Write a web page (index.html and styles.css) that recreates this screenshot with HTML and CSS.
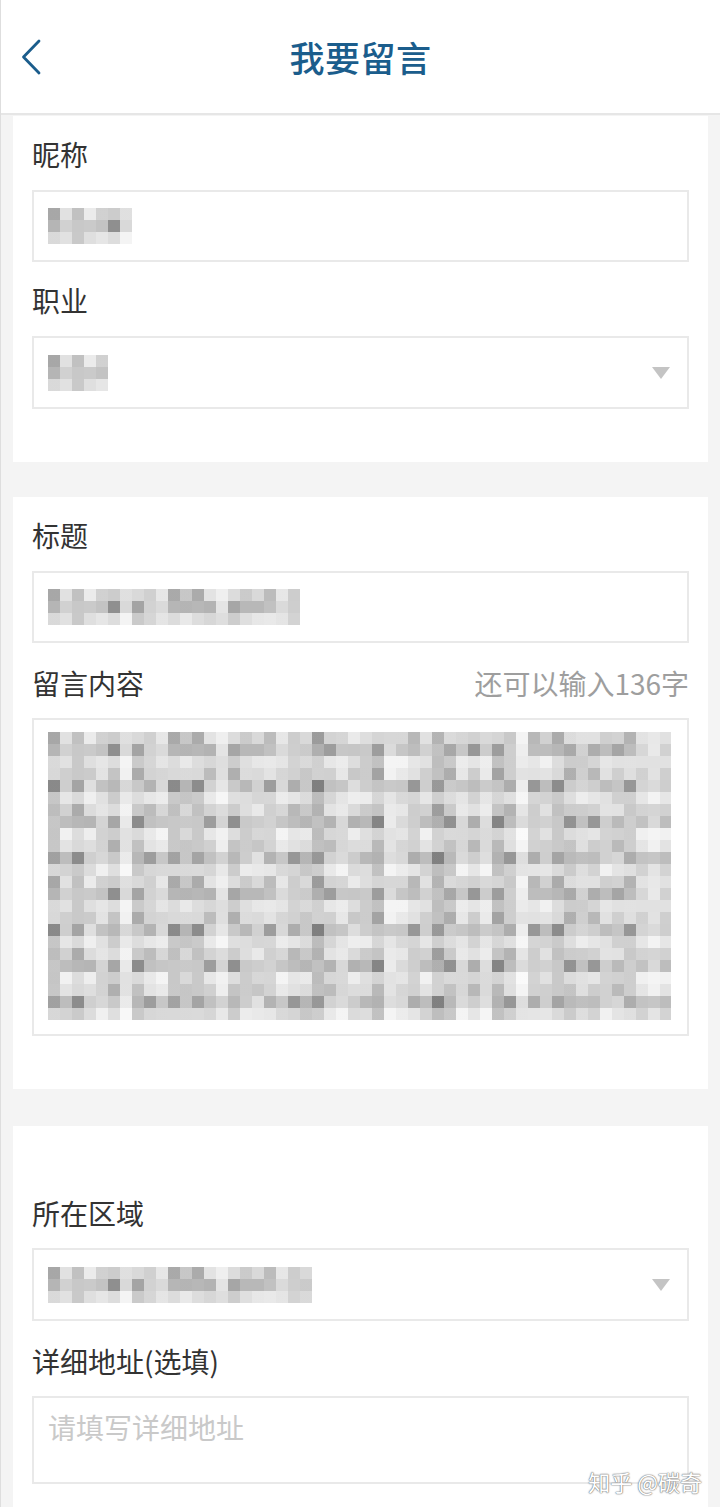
FILE: index.html
```html
<!DOCTYPE html>
<html lang="zh-CN">
<head>
<meta charset="utf-8">
<title>我要留言</title>
<link rel="stylesheet" href="styles.css">
</head>
<body>
<header class="topbar">
  <div class="back">
    <svg width="22" height="36" viewBox="0 0 22 36"><path d="M19 2 L3.5 18 L19 34" fill="none" stroke="#1b5d8c" stroke-width="2.8" stroke-linecap="round" stroke-linejoin="round"/></svg>
  </div>
  <h1 class="title">我要留言</h1>
  <div></div>
</header>

<section class="card card-first">
  <div class="label">昵称</div>
  <div class="field"><div class="mosaic m-nick"></div></div>
  <div class="label">职业</div>
  <div class="field select"><div class="mosaic m-job"></div><span class="caret"></span></div>
</section>

<section class="card card-mid">
  <div class="label">标题</div>
  <div class="field"><div class="mosaic m-title"></div></div>
  <div class="label label-row"><span>留言内容</span><span class="hint">还可以输入136字</span></div>
  <div class="field textarea"><div class="mosaic m-body"></div></div>
</section>

<section class="card card-last">
  <div class="label">所在区域</div>
  <div class="field select"><div class="mosaic m-area"></div><span class="caret"></span></div>
  <div class="label">详细地址(选填)</div>
  <div class="field address"><span class="placeholder">请填写详细地址</span></div>
  <div class="watermark">知乎 @碳奇</div>
</section>
</body>
</html>
```

FILE: styles.css
```css
* { box-sizing: border-box; }
html, body { margin: 0; padding: 0; }
body {
  background: #f4f4f4;
  font-family: "Noto Sans CJK SC", "Noto Sans", sans-serif;
  color: #333;
  width: 720px;
  height: 1507px;
  overflow: hidden;
  border-left: 1px solid #dedede;
}
.topbar {
  height: 115px;
  background: #fff;
  border-bottom: 2px solid #e6e6e6;
  display: grid;
  grid-template-columns: 1fr auto 1fr;
  align-items: center;
}
.back { padding-left: 19px; display: flex; align-items: center; }
.back svg { display: block; }
.title {
  margin: 0;
  font-size: 35px;
  font-weight: 500;
  color: #1b5d8c;
  line-height: 40px;
  letter-spacing: 0.5px;
}
.card {
  background: #fff;
  margin: 0 12px;
  padding: 20px 19px 53px 19px;
  position: relative;
}
.card-first { margin-top: 1px; }
.card-mid { margin-top: 35px; }
.card-last { margin-top: 37px; padding-top: 69px; padding-bottom: 23px; }
.label {
  font-size: 28px;
  line-height: 36px;
  margin-bottom: 18px;
  color: #333;
}
.field + .label { margin-top: 20px; }
.card-mid .field + .label,
.card-last .field + .label { margin-top: 22px; }
.card-mid .label-row,
.card-last .label { margin-bottom: 17px; }
.label-row { display: flex; justify-content: space-between; }
.hint { color: #9e9e9e; font-size: 28px; }
.field {
  height: 72px;
  border: 2px solid #e9e9e9;
  display: flex;
  align-items: center;
  padding: 0 14px;
  position: relative;
}
.select { height: 73px; }
.textarea { height: 318px; align-items: flex-start; padding-top: 12px; }
.address { height: 88px; align-items: flex-start; padding-top: 11px; }
.placeholder { font-size: 28px; line-height: 36px; color: #c9c9c9; }
.caret {
  position: absolute;
  right: 17px;
  top: 29px;
  width: 0; height: 0;
  border-left: 9px solid transparent;
  border-right: 9px solid transparent;
  border-top: 12px solid #c4c4c4;
}
.mosaic {
  height: 36px;
  background:
    repeating-conic-gradient(rgba(255,255,255,.2) 0 25%, rgba(255,255,255,0) 0 50%) 0 0 / 24px 24px,
    repeating-conic-gradient(rgba(0,0,0,.07) 0 25%, rgba(255,255,255,.12) 0 50%) 12px 0 / 72px 48px,
    repeating-conic-gradient(rgba(255,255,255,.25) 0 25%, rgba(255,255,255,0) 0 50%) 36px 12px / 120px 72px,
    repeating-linear-gradient(90deg, rgba(255,255,255,0) 0 12px, rgba(255,255,255,.25) 12px 24px, rgba(0,0,0,.07) 24px 36px, rgba(255,255,255,.08) 36px 48px, rgba(255,255,255,.4) 48px 60px),
    repeating-linear-gradient(90deg, rgba(0,0,0,.09) 0 12px, rgba(255,255,255,0) 12px 36px, rgba(255,255,255,.3) 36px 48px, rgba(0,0,0,.05) 48px 72px, rgba(255,255,255,.55) 72px 84px, rgba(255,255,255,0) 84px 120px, rgba(0,0,0,.08) 120px 132px),
    linear-gradient(180deg, #c6c6c6 0 12px, #a2a2a2 12px 24px, #dadada 24px 36px) 0 0 / 100% 36px;
}
.m-nick { width: 84px; }
.m-job { width: 60px; }
.m-title { width: 252px; }
.m-area { width: 264px; }
.m-body { width: 623px; height: 288px; }
.watermark {
  position: absolute;
  right: 6px;
  bottom: 12px;
  font-size: 22px;
  line-height: 28px;
  color: #fff;
  text-shadow: 0 0 1px #777, 0 0 1px #777, 0 0 2px #999;
}
```
